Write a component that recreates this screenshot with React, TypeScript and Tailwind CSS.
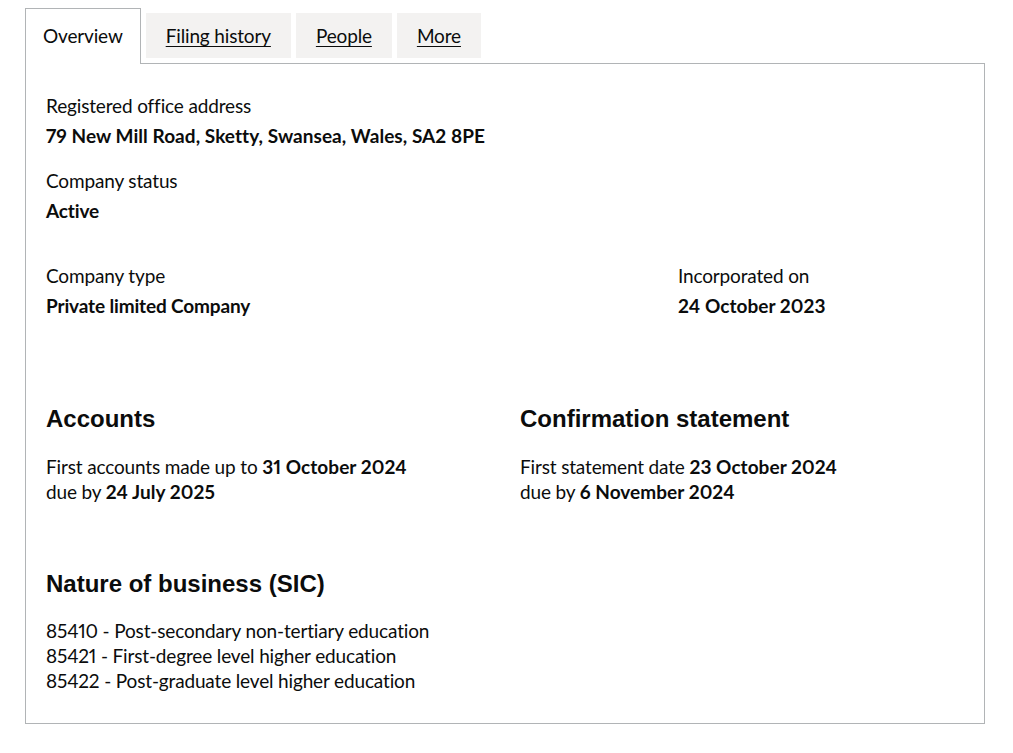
import React from "react";

const body = "font-['Lato','Liberation_Sans',sans-serif] text-[19px] leading-[25px] text-[#0b0c0c] proportional-nums tracking-[-0.15px]";
const heading = "font-['Liberation_Sans',Arial,sans-serif] text-[24px] leading-[30px] font-bold text-[#0b0c0c] tracking-normal";

const Tab = ({ label, selected }: { label: string; selected?: boolean }) => {
  if (selected) {
    return (
      <li className="mr-[5px] -mt-[5px] -mb-px border border-b-0 border-[#b1b4b6] bg-white px-[17px] pt-[14px] pb-[16px] relative z-10">
        <span>{label}</span>
      </li>
    );
  }
  return (
    <li className="mr-[5px] bg-[#f3f2f1] px-5 py-[10px]">
      <a href="#" className="underline underline-offset-[3px] decoration-1">
        {label}
      </a>
    </li>
  );
};

const App = () => {
  return (
    <div className={`min-h-[753px] bg-white pl-[25px] pt-[13px] ${body}`}>
      <div className="w-[960px]">
        <ul className="flex items-start">
          <Tab label="Overview" selected />
          <Tab label="Filing history" />
          <Tab label="People" />
          <Tab label="More" />
        </ul>

        <div className="border border-[#b1b4b6] px-5 pt-[29px] pb-[30px]">
          <dl>
            <dt className="mb-[5px]">Registered office address</dt>
            <dd className="font-bold tracking-[0.05px] mb-5">79 New Mill Road, Sketty, Swansea, Wales, SA2 8PE</dd>
            <dt className="mb-[5px]">Company status</dt>
            <dd className="font-bold mb-10">Active</dd>
          </dl>

          <div className="flex -mx-[15px]">
            <dl className="w-2/3 px-[15px]">
              <dt className="mb-[5px]">Company type</dt>
              <dd className="font-bold">Private limited Company</dd>
            </dl>
            <dl className="w-1/3 px-[15px]">
              <dt className="mb-[5px]">Incorporated on</dt>
              <dd className="font-bold tracking-[0.05px]">24 October 2023</dd>
            </dl>
          </div>

          <div className="flex -mx-[15px] mt-[86px]">
            <div className="w-1/2 px-[15px]">
              <h2 className={`${heading} mb-5`}>Accounts</h2>
              <p>
                First accounts made up to <strong className="tracking-[0.05px]">31 October 2024</strong>
                <br />
                due by <strong className="tracking-[0.05px]">24 July 2025</strong>
              </p>
            </div>
            <div className="w-1/2 px-[15px]">
              <h2 className={`${heading} mb-5`}>Confirmation statement</h2>
              <p>
                First statement date <strong className="tracking-[0.05px]">23 October 2024</strong>
                <br />
                due by <strong className="tracking-[0.05px]">6 November 2024</strong>
              </p>
            </div>
          </div>

          <h2 className={`${heading} mt-[65px] mb-[19px]`}>Nature of business (SIC)</h2>
          <ul>
            <li>85410 - Post-secondary non-tertiary education</li>
            <li>85421 - First-degree level higher education</li>
            <li>85422 - Post-graduate level higher education</li>
          </ul>
        </div>
      </div>
    </div>
  );
};

export default App;
